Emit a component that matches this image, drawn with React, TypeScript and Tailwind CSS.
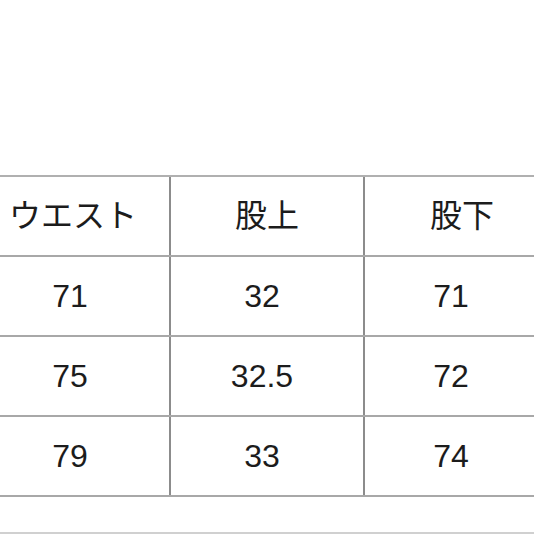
const rows = [
  ['ウエスト', '股上', '股下'],
  ['71', '32', '71'],
  ['75', '32.5', '72'],
  ['79', '33', '74'],
]

// numbers sit a little left of the header text in each column
const numPad = ['pr-[6px]', 'pr-[10px]', 'pr-[22px]']

export default function App() {
  return (
    <div
      className="w-[534px] h-[534px] overflow-hidden bg-white text-[#1c1c1c]"
      style={{ fontFamily: '"Liberation Sans", "Noto Sans CJK JP", sans-serif' }}
    >
      <div className="h-[175px]" />
      <div className="ml-[-23px] w-[600px] border-t-2 border-[#b0b0b0]">
        {rows.map((row, i) => (
          <div key={i} className="flex h-[80px] border-b-2 border-[#a8a8a8]">
            {row.map((cell, j) => (
              <div
                key={j}
                className={
                  'w-[194px] flex items-center justify-center text-[32px] ' +
                  (j < 2 ? 'border-r-2 border-[#8c8c8c] ' : '') +
                  (i > 0 ? numPad[j] : '')
                }
              >
                {cell}
              </div>
            ))}
          </div>
        ))}
      </div>
      <div className="mt-[35px] border-t-2 border-[#d0d0d0]" />
    </div>
  )
}
